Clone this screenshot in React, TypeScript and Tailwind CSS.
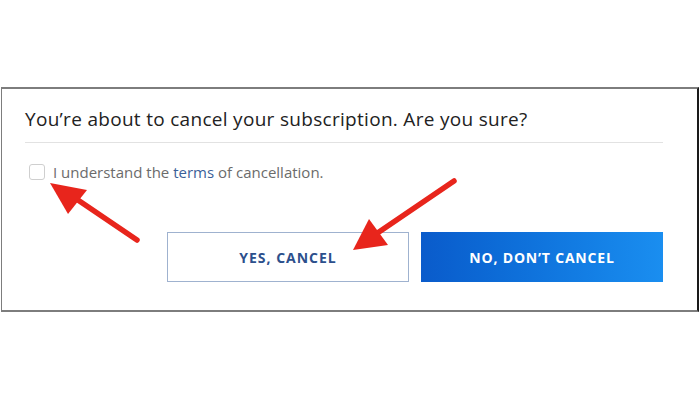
export default function App() {
  return (
    <div className="relative w-[700px] h-[400px] bg-white overflow-hidden font-['Open_Sans',sans-serif]">
      <div className="mt-[87px] ml-[1px] w-[698px] h-[225px] border-2 border-[#7d7d7d] border-r-[#1a1a1a] border-l-[1px] pl-[23px] pr-[34px] pt-[18px]">
        <h1 className="h-[24px] leading-[24px] text-[19px] text-[#222] tracking-[0.3px]">
          You’re about to cancel your subscription. Are you sure?
        </h1>
        <div className="mt-[11px] h-px bg-[#e2e2e2]"></div>

        <label className="mt-[21px] flex items-center gap-[8px] pl-[4px]">
          <span className="w-[16px] h-[16px] rounded-[3px] border border-[#cfcfcf] bg-white"></span>
          <span className="text-[15px] leading-[16px] text-[#6b6b6b]">
            I understand the <span className="text-[#3b5f98]">terms</span> of cancellation.
          </span>
        </label>

        <div className="mt-[52px] flex justify-end gap-[12px]">
          <button className="w-[242px] h-[50px] border border-[#9fb2cf] bg-white text-[14px] font-bold tracking-[1px] text-[#2c4f8c]">
            YES, CANCEL
          </button>
          <button className="w-[242px] h-[50px] bg-gradient-to-r from-[#0a5bcb] to-[#1a8ef0] text-[14px] font-bold tracking-[0.8px] text-white">
            NO, DON’T CANCEL
          </button>
        </div>
      </div>

      {/* red annotation arrows */}
      <svg className="absolute inset-0 pointer-events-none" width="700" height="400" viewBox="0 0 700 400">
        <line x1="137" y1="240" x2="72" y2="196" stroke="#e8251c" strokeWidth="5.5" strokeLinecap="round" />
        <polygon points="50,183 87,190 68,214" fill="#e8251c" />
        <line x1="454" y1="181" x2="376" y2="234" stroke="#e8251c" strokeWidth="5.5" strokeLinecap="round" />
        <polygon points="353,250 369,219 388,245" fill="#e8251c" />
      </svg>
    </div>
  );
}
